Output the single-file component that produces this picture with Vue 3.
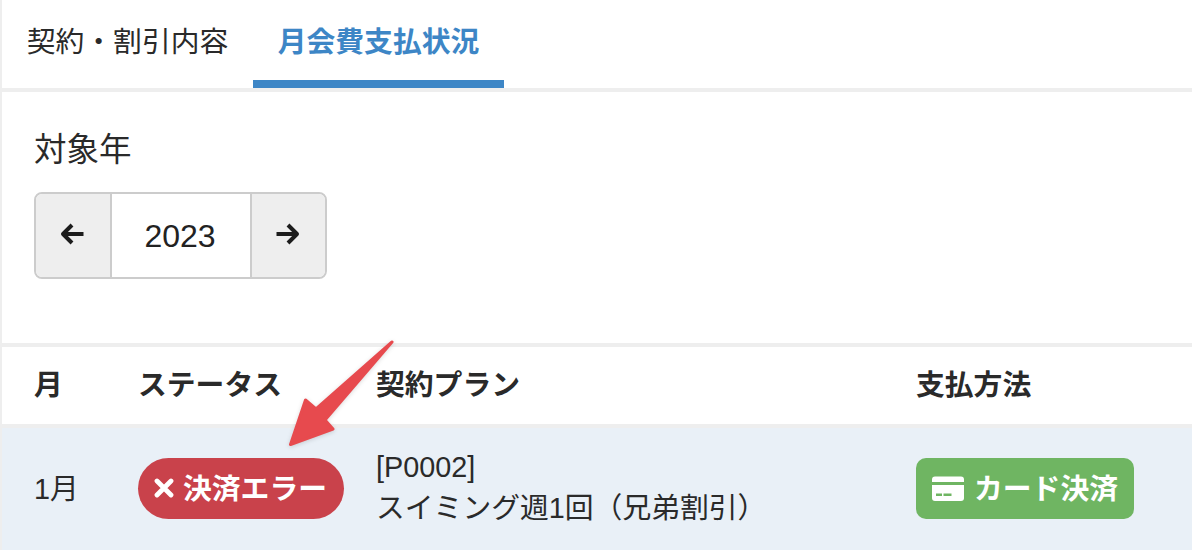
<template>
  <div class="page">
    <div class="tabs">
      <a class="tab">契約・割引内容</a>
      <a class="tab active">月会費支払状況</a>
    </div>

    <div class="filter">
      <div class="filter-label">対象年</div>
      <div class="year-group">
        <button class="year-btn prev">
          <svg width="26" height="26" viewBox="0 0 26 26"><path d="M24.500 13H5M13 4L4 13l9 9" fill="none" stroke="#1c1c1c" stroke-width="4" stroke-linejoin="round" /></svg>
        </button>
        <div class="year-value">{{ year }}</div>
        <button class="year-btn next">
          <svg width="26" height="26" viewBox="0 0 26 26"><path d="M1.500 13H21M13 4l9 9-9 9" fill="none" stroke="#1c1c1c" stroke-width="4" stroke-linejoin="round" /></svg>
        </button>
      </div>
    </div>

    <div class="table">
      <div class="row head">
        <div v-for="col in columns" :key="col">{{ col }}</div>
      </div>
      <div class="row body">
        <div class="month">1月</div>
        <div>
          <span class="badge error">
            <svg width="20" height="20" viewBox="0 0 20 20"><path d="M3 3l14 14M17 3L3 17" stroke="#fff" stroke-width="4.800" stroke-linecap="round" /></svg>
            <span class="badge-text">決済エラー</span>
          </span>
        </div>
        <div class="plan">[P0002]<br />スイミング週1回（兄弟割引）</div>
        <div>
          <span class="badge card">
            <svg width="32" height="25" viewBox="0 0 32 25">
              <path d="M0 6V3.500A3 3 0 0 1 3 .5h26a3 3 0 0 1 3 3V6z" fill="#fff" />
              <path d="M0 9h32v13a3 3 0 0 1-3 3H3a3 3 0 0 1-3-3z" fill="#fff" />
              <path d="M4 17.500h6V20H4zM11.500 17.500h8V20h-8z" fill="#6fb562" />
            </svg>
            <span class="badge-text">カード決済</span>
          </span>
        </div>
      </div>
    </div>

    <!-- 注釈の矢印 -->
    <svg class="callout" width="120" height="120" viewBox="0 0 120 120">
      <path d="M104 12 L28 79 L17.500 70 L2.500 114.500 L45 99 L37 90 L104 12 Z" transform="translate(-1 0)" fill="#e74a4e" stroke="#e74a4e" stroke-width="3" stroke-linejoin="round" />
    </svg>
  </div>
</template>

<script setup>
import { ref } from 'vue'

const year = ref(2023)
const columns = ['月', 'ステータス', '契約プラン', '支払方法']
</script>

<style scoped>
.page {
  position: relative;
  width: 1192px;
  height: 550px;
  overflow: hidden;
  box-sizing: border-box;
  border-left: 2px solid #eeeeee;
  background: #ffffff;
  color: #2a2a2a;
  font-family: "Liberation Sans", "Noto Sans CJK JP", sans-serif;
  font-size: 28.8px;
}

.tabs {
  display: flex;
  height: 88px;
  border-bottom: 4px solid #eeeeee;
}
.tab {
  width: 251px;
  height: 88px;
  box-sizing: border-box;
  padding-top: 21px;
  line-height: 42px;
  text-align: center;
  white-space: nowrap;
}
.tab.active {
  color: #3d86c6;
  font-weight: 700;
  border-bottom: 8px solid #3d86c6;
}

.filter {
  height: 251px;
  box-sizing: border-box;
  padding: 35px 0 0 32px;
}
.filter-label {
  font-size: 32.500px;
  line-height: 46px;
}
.year-group {
  display: flex;
  width: 293px;
  height: 87px;
  margin-top: 19px;
  box-sizing: border-box;
  border: 2px solid #cccccc;
  border-radius: 8px;
  overflow: hidden;
}
.year-btn {
  display: flex;
  align-items: center;
  justify-content: center;
  padding: 0 0 4px;
  border: 0;
  background: #eeeeee;
}
.year-btn.prev {
  flex: 0 0 74px;
  padding-right: 2px;
}
.year-btn.next {
  flex: 0 0 73px;
  padding-right: 2px;
}
.year-value {
  flex: 1;
  box-sizing: border-box;
  padding-right: 2px;
  border-left: 2px solid #cccccc;
  border-right: 2px solid #cccccc;
  text-align: center;
  font-size: 32px;
  line-height: 85px;
  color: #222222;
}

.table {
  border-top: 4px solid #eeeeee;
}
.row {
  display: grid;
  grid-template-columns: 104px 238px 540px 1fr;
  padding-left: 32px;
  align-items: center;
}
.head {
  height: 77px;
  font-weight: 700;
  border-bottom: 4px solid #eeeeee;
}
.head > div {
  margin-bottom: 6px;
}
.body {
  height: 122px;
  background: #e9f0f7;
  padding-bottom: 2px;
  box-sizing: border-box;
}
.month {
  margin-bottom: 3px;
}
.plan {
  line-height: 41px;
}

.badge {
  display: inline-flex;
  align-items: center;
  height: 61px;
  box-sizing: border-box;
  color: #ffffff;
  font-weight: 700;
  white-space: nowrap;
}
.badge-text {
  margin-bottom: 4px;
}
.badge.error {
  width: 206px;
  padding-left: 16px;
  gap: 9px;
  background: #c9424b;
  border-radius: 31px;
}
.badge.card {
  width: 218px;
  padding-left: 16px;
  gap: 10px;
  background: #6fb562;
  border-radius: 10px;
}

.callout {
  position: absolute;
  left: 287px;
  top: 330px;
  filter: drop-shadow(0 1px 2px rgba(0, 0, 0, 0.15));
}
</style>
